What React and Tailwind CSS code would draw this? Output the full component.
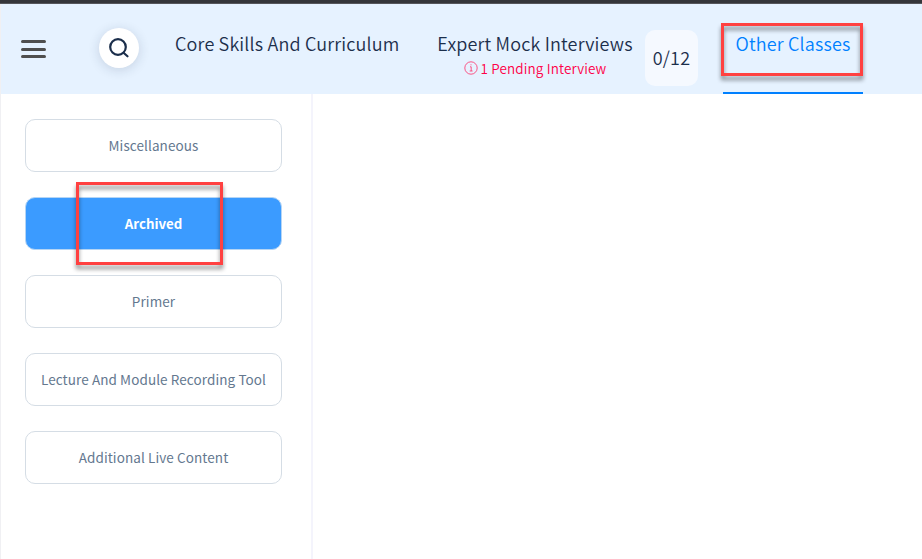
const items = [
  { label: "Miscellaneous" },
  { label: "Archived", active: true },
  { label: "Primer" },
  { label: "Lecture And Module Recording Tool" },
  { label: "Additional Live Content" },
];

function Highlight({ className }) {
  return (
    <div
      className={`pointer-events-none absolute border-3 border-[#ff4141] [filter:drop-shadow(0_4px_2px_rgba(0,0,0,0.45))] ${className}`}
    />
  );
}

function Header() {
  return (
    <header className="flex h-[90px] shrink-0 items-start bg-[#e6f2ff] text-[18px] leading-6 font-[350] tracking-[0.17px] whitespace-nowrap text-[#1b2e4b]">
      <button className="mt-9 ml-5 flex h-[18px] w-[25px] flex-col justify-between" aria-label="Menu">
        <span className="h-[3px] w-full rounded-full bg-[#4f4f4f]" />
        <span className="h-[3px] w-full rounded-full bg-[#4f4f4f]" />
        <span className="h-[3px] w-full rounded-full bg-[#4f4f4f]" />
      </button>
      <button
        className="mt-6 ml-[53px] flex size-10 items-center justify-center rounded-full bg-white shadow-[0_2px_12px_rgba(27,46,75,0.16)]"
        aria-label="Search"
      >
        <svg width="22" height="22" viewBox="0 0 22 22" fill="none" stroke="#1b2e4b" strokeWidth="2.2" strokeLinecap="round">
          <circle cx="10" cy="10" r="7.8" />
          <path d="M15.8 16 L19.5 19.3" />
        </svg>
      </button>
      <nav className="flex h-full items-start">
        <a className="mt-[27px] ml-9 w-[224px]">Core Skills And Curriculum</a>
        <div className="mt-[27px] ml-[38px] flex w-[196px] flex-col items-center">
          <a>Expert Mock Interviews</a>
          <div className="mt-px flex items-center gap-[3px] text-[13.5px] tracking-[0.14px] text-[#ff0048]">
            <svg width="14" height="14" viewBox="0 0 14 14" fill="none" stroke="#ff2e68" strokeWidth="0.8">
              <circle cx="7" cy="7" r="6.2" />
              <path d="M6 5.8 H7.2 V10 M5.7 10 H8.6 M6.5 3.8 H7.5" />
            </svg>
            <span>1 Pending Interview</span>
          </div>
        </div>
        <div className="mt-[26px] ml-3 flex h-14 w-[53px] items-center justify-center rounded-[10px] bg-[#f5f9ff] pb-0.5">0/12</div>
        <div className="relative ml-[25px] flex h-full w-[140px] justify-center border-b-2 border-[#0080ff] pt-[27px] text-[#0080ff]">
          <a>Other Classes</a>
          <Highlight className="top-[19px] -left-[2px] h-[53px] w-[142px]" />
        </div>
      </nav>
    </header>
  );
}

function Sidebar() {
  return (
    <aside className="flex w-[312px] flex-col gap-[25px] border-r-2 border-[#f4f4fc] pt-[25px] pr-[29px] pl-6">
      {items.map(({ label, active }) => (
        <div
          key={label}
          className={`relative flex h-[53px] shrink-0 items-center justify-center rounded-[10px] border whitespace-nowrap ${
            active
              ? "border-[#b5d5f5] bg-[#3b9bff] text-[13.3px] font-bold text-white"
              : "border-[#d5dde5] bg-white text-[13.5px] tracking-[0.09px] text-[#64788f]"
          }`}
        >
          {label}
          {active && <Highlight className="-top-4 left-[50px] h-[83px] w-[147px]" />}
        </div>
      ))}
    </aside>
  );
}

export default function App() {
  return (
    <div className="flex h-[559px] w-[922px] flex-col overflow-hidden bg-white font-['Noto_Sans_CJK_SC',sans-serif]">
      <div className="h-1 shrink-0 border-b border-[#55565b] bg-[#35363a]" />
      <div className="flex min-h-0 flex-1 flex-col border-l border-[#f0f0f3]">
        <Header />
        <main className="flex min-h-0 flex-1">
          <Sidebar />
          <section className="flex-1 bg-white" />
        </main>
      </div>
    </div>
  );
}
